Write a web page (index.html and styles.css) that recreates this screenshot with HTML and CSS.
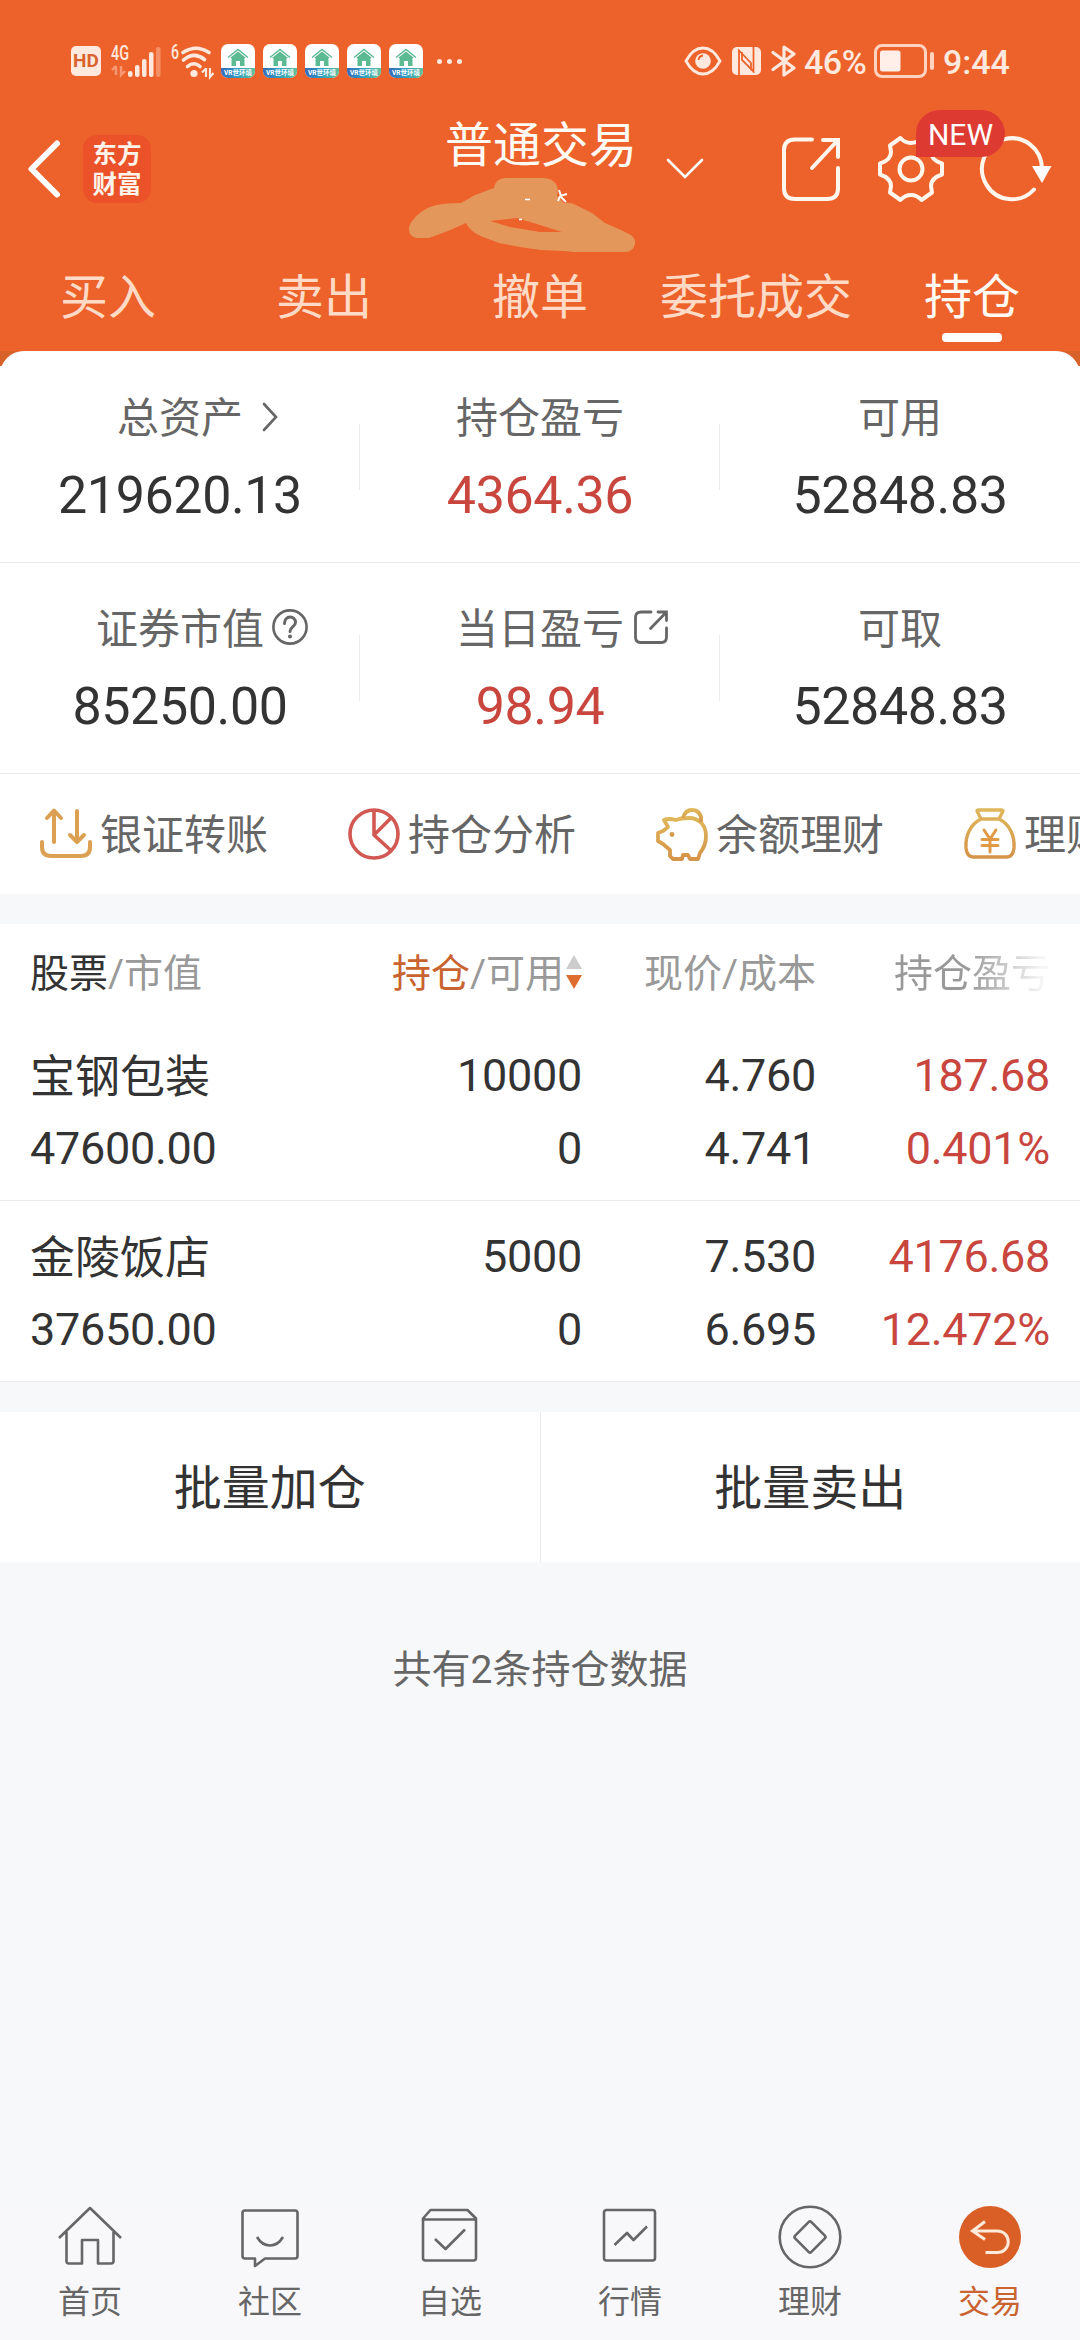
FILE: index.html
```html
<!DOCTYPE html>
<html lang="zh-CN">
<head>
  <meta charset="UTF-8">
  <title>普通交易</title>
  <link rel="stylesheet" href="styles.css">
</head>
<body>
  <!-- shared symbols -->
  <svg class="defs" width="0" height="0">
    <defs>
      <linearGradient id="strip" x1="0" x2="1" y1="0" y2="0">
        <stop offset="0" stop-color="#3a6ab8"/>
        <stop offset="0.5" stop-color="#2f9fc0"/>
        <stop offset="1" stop-color="#62c09a"/>
      </linearGradient>
      <linearGradient id="gold" x1="0" x2="0" y1="0" y2="1">
        <stop offset="0" stop-color="#dfb65a"/>
        <stop offset="1" stop-color="#d59449"/>
      </linearGradient>
      <clipPath id="app-clip"><rect width="34" height="34" rx="7"/></clipPath>
    </defs>
    <symbol id="app" viewBox="0 0 34 34">
      <g clip-path="url(#app-clip)">
        <rect width="34" height="34" fill="#fff"/>
        <rect y="24" width="34" height="10" fill="url(#strip)"/>
        <path d="M7 13.5L17 5.5l10 8" fill="none" stroke="#5cba92" stroke-width="1.4"/>
        <path d="M17 7.5l8 6.5h-1.5v8H19v-5h-4v5h-4.500v-8H9z" fill="#5cba92"/>
      </g>
    </symbol>
  </svg>

  <div class="header">
    <div class="status">
      <div class="status-left">
        <span class="hd">HD</span>
        <svg class="signal" width="50" height="34" viewBox="0 0 50 34" fill="#ffe9df">
          <text class="net" x="0" y="16" textLength="18" lengthAdjust="spacingAndGlyphs">4G</text>
          <path d="M5 22v9M1 26l4-4M10 22v9l4-4" fill="none" stroke="#f59a75" stroke-width="2.4"/>
          <rect x="17" y="27" width="4.5" height="6" rx="2"/>
          <rect x="24" y="21" width="4.5" height="12" rx="2"/>
          <rect x="31" y="15" width="4.5" height="18" rx="2"/>
          <rect x="38" y="8" width="4.5" height="25" rx="2"/>
          <rect x="45" y="3" width="4.5" height="30" rx="2" fill="#f58f66"/>
        </svg>
        <svg class="wifi" width="44" height="34" viewBox="0 0 44 34">
          <text class="net" x="0" y="15" fill="#ffe9df" textLength="8" lengthAdjust="spacingAndGlyphs">6</text>
          <g fill="none" stroke="#ffe9df" stroke-width="3.6" stroke-linecap="round">
            <path d="M12 8.5Q25 0 38 8.500"/>
            <path d="M12.500 16Q23 7 33.500 15.500"/>
            <path d="M16.500 22.500Q23 17 29 22.500"/>
          </g>
          <circle cx="23" cy="29.500" r="3.600" fill="#ffe9df"/>
          <path d="M35 24v9M31 28.500l4-4M39 24v9l3.500-4" fill="none" stroke="#ffe9df" stroke-width="2.200"/>
        </svg>
        <div class="apps">
          <div class="app"><svg width="34" height="34"><use href="#app"/></svg><span>VR世环境</span></div>
          <div class="app"><svg width="34" height="34"><use href="#app"/></svg><span>VR世环境</span></div>
          <div class="app"><svg width="34" height="34"><use href="#app"/></svg><span>VR世环境</span></div>
          <div class="app"><svg width="34" height="34"><use href="#app"/></svg><span>VR世环境</span></div>
          <div class="app"><svg width="34" height="34"><use href="#app"/></svg><span>VR世环境</span></div>
        </div>
        <div class="dots"><i></i><i></i><i></i></div>
      </div>
      <div class="status-right">
        <svg width="38" height="30" viewBox="0 0 38 30">
          <path d="M2 15Q9 2 19 2T36 15Q29 28 19 28T2 15z" fill="none" stroke="#ffe9df" stroke-width="2.800"/>
          <circle cx="19" cy="15" r="7.800" fill="#ffe9df"/>
          <path d="M14.500 14q.5-4 4.500-4.500" fill="none" stroke="#ed622b" stroke-width="1.800"/>
        </svg>
        <svg class="nfc" width="29" height="28" viewBox="0 0 29 28">
          <rect width="29" height="28" rx="5" fill="#ffe9df"/>
          <path d="M7 28V3.500L19 16v7.500M21.500 0v24.500L10 13V5" fill="none" stroke="#ed622b" stroke-width="1.800"/>
        </svg>
        <svg class="bt" width="26" height="32" viewBox="0 0 26 32">
          <path d="M2 7.500L23 23 13 30V2l10 7L2 24.500" fill="none" stroke="#ffe9df" stroke-width="3.200" stroke-linejoin="round" stroke-linecap="round"/>
        </svg>
        <span class="percent">46%</span>
        <svg class="battery" width="61" height="34" viewBox="0 0 61 34">
          <rect x="1.500" y="1.500" width="50" height="31" rx="6.500" fill="none" stroke="#ffd3bf" stroke-width="3"/>
          <rect x="6" y="6.500" width="20.500" height="21" rx="2.500" fill="#ffefe8"/>
          <rect x="56" y="8" width="4" height="18" rx="2" fill="#ffd3bf"/>
        </svg>
        <span class="time">9:44</span>
      </div>
    </div>

    <div class="navbar">
      <svg class="back" width="34" height="58" viewBox="0 0 34 58">
        <path d="M30 3.500L4.500 29 30 54.500" fill="none" stroke="#fff" stroke-width="6" stroke-linecap="round" stroke-linejoin="round"/>
      </svg>
      <div class="logo">东方<br>财富</div>
      <div class="title">普通交易</div>
      <svg class="down" width="38" height="22" viewBox="0 0 38 22">
        <path d="M2 2l17 17L36 2" fill="none" stroke="#fff" stroke-width="2.600" stroke-linecap="round"/>
      </svg>
      <svg class="share" width="58" height="64" viewBox="0 0 58 64" fill="none" stroke="#fff6ee" stroke-width="4" stroke-linecap="round">
        <path d="M30 2.500H13Q2 2.500 2 13v38.500Q2 62 13 62h32q11 0 11-10.500V31"/>
        <path d="M41 3h15v17M56 3L30 31"/>
      </svg>
      <div class="setting">
        <svg width="68" height="68" viewBox="-34 -34 68 68" fill="none" stroke="#fff6ee" stroke-width="4" stroke-linejoin="round">
          <path d="M-31-5.500v11Q-20 9-20 17l-1 6.500L-10.500 31Q-6 26 0 26t10.500 5L21 23.500 20 17Q20 9 31 5.500v-11Q20-9 20-17l1-6.500L10.500-31Q6-26 0-26t-10.500-5L-21-23.500-20-17Q-20-9-31-5.500z"/>
          <circle r="11.500"/>
        </svg>
        <span class="badge">NEW</span>
      </div>
      <svg class="refresh" width="74" height="68" viewBox="-34 -34 74 68">
        <path d="M22 20.500A30 30.500 0 1 1 30 0" fill="none" stroke="#fff6ee" stroke-width="4" stroke-linecap="round"/>
        <path d="M20-3h19.500L30 14z" fill="#fff"/>
      </svg>
      <!-- marker stroke hiding the account number -->
      <svg class="scribble" width="228" height="76" viewBox="0 0 228 76">
        <path d="M1 52Q1 47 5 43 12 34 22 30 32 26 53 26L67 18 86 11Q87 2 97 1H135Q144 1 148 7 151 12 149 19L156 26Q163 25 170 29L184 36 197 46 213 53 223 58Q228 62 227 67 225 75 217 75H166L156 74 132 73 112 70 91 66 75 60Q62 55 58 46L40 54 21 61H9Q1 60 1 52z" fill="#e4975a"/>
        <path d="M82 44l27-3 23 7 22 7h-22l-30-5z" fill="#ed622b"/>
        <path d="M151 13l2 6m-1 0l7-2m-7 2l6 6m-6-6l-2 5" fill="none" stroke="#fff" stroke-width="2"/>
        <path d="M117 22.500h5M111 42.500h3" stroke="#fff" stroke-width="1.600"/>
      </svg>
    </div>

    <div class="tabs">
      <div class="tab">买入</div>
      <div class="tab">卖出</div>
      <div class="tab">撤单</div>
      <div class="tab">委托成交</div>
      <div class="tab active">持仓</div>
    </div>
  </div>

  <div class="summary-wrap">
    <div class="summary">
      <div class="row">
        <div class="cell">
          <div class="label">总资产<svg class="more" width="18" height="30" viewBox="0 0 18 30"><path d="M3 2l12 13L3 28" fill="none" stroke="#666" stroke-width="2.600" stroke-linecap="round"/></svg></div>
          <div class="value">219620.13</div>
        </div>
        <div class="cell">
          <div class="label">持仓盈亏</div>
          <div class="value red">4364.36</div>
        </div>
        <div class="cell">
          <div class="label">可用</div>
          <div class="value">52848.83</div>
        </div>
      </div>
      <div class="row">
        <div class="cell">
          <div class="label">证券市值<svg class="help" width="36" height="36" viewBox="0 0 36 36" fill="none" stroke="#666" stroke-linecap="round"><circle cx="18" cy="18" r="16.600" stroke-width="2.600"/><path d="M12.500 14.500C12.500 6 23.500 6 23.500 13.500c0 4-5.500 4.500-5.500 9" stroke-width="3"/><circle cx="18" cy="27.500" r="1" stroke-width="2"/></svg></div>
          <div class="value">85250.00</div>
        </div>
        <div class="cell">
          <div class="label">当日盈亏<svg class="open" width="34" height="34" viewBox="0 0 34 34" fill="none" stroke="#666" stroke-width="2.800" stroke-linecap="round"><path d="M17 2H7Q1.500 2 1.500 7v20q0 5.500 5 5.500h21q5 0 5-5.500V18"/><path d="M24 2h8.500v8.500M32.500 2l-16 16.500"/></svg></div>
          <div class="value red">98.94</div>
        </div>
        <div class="cell">
          <div class="label">可取</div>
          <div class="value">52848.83</div>
        </div>
      </div>
      <div class="shortcuts">
        <div class="shortcut">
          <svg width="52" height="52" viewBox="0 0 52 52" fill="none" stroke="#dba052" stroke-width="4" stroke-linecap="round" stroke-linejoin="round">
            <path d="M14 34V3M7 10l7-7.500L21 10M37 3v31M30 27l7 7 7-7"/>
            <path d="M2 34v5q0 9 9 9h30q9 0 9-9v-5"/>
          </svg>
          <span>银证转账</span>
        </div>
        <div class="shortcut">
          <svg width="52" height="52" viewBox="0 0 52 52" fill="none" stroke="#d25953" stroke-width="3.600">
            <circle cx="26" cy="26" r="24"/>
            <path d="M26 2v25l17 15.500M26 27L43.500 9.500"/>
          </svg>
          <span>持仓分析</span>
        </div>
        <div class="shortcut">
          <svg width="52" height="52" viewBox="0 0 52 52" fill="none" stroke="url(#gold)" stroke-width="3.800" stroke-linejoin="round">
            <path d="M12 19L8 12q4-2 12 0 5-2 13-2c11 0 17 8 17 18 0 7-2 12-6 17l-2 6h-8l-2-4h-5l-1 4h-9l-3-3v-6l-7-6-5-3v-8l5-2z"/>
            <path d="M27 10q2-8 9-8t9 7v5"/>
            <circle cx="16" cy="26.500" r="2.400" fill="#d59a4a" stroke="none"/>
          </svg>
          <span>余额理财</span>
        </div>
        <div class="shortcut">
          <svg width="52" height="52" viewBox="0 0 52 52" fill="none" stroke="url(#gold)" stroke-width="3.400" stroke-linejoin="round" stroke-linecap="round">
            <path d="M17 11l-4-8q0-1 2-1h22q2 0 2 1l-4 8zM17 11C7 16 1 27 2 40q1 9 7 9h34q6 0 7-9c1-13-5-24-15-29"/>
            <path d="M20 22l6 9 6-9M18 31.500h16M18 37.500h16M26 31v13" stroke="#e09a45" stroke-width="3"/>
          </svg>
          <span>理财</span>
        </div>
      </div>
    </div>
  </div>

  <div class="positions">
    <div class="thead">
      <div><b>股票</b>/市值</div>
      <div><b class="on">持仓</b>/可用<svg class="sort" width="16" height="36" viewBox="0 0 16 36"><path d="M8 1l8 14H0z" fill="#ccc"/><path d="M0 21h16L8 35z" fill="#df6d32"/></svg></div>
      <div>现价/成本</div>
      <div class="fade">持仓盈亏</div>
    </div>
    <div class="stock">
      <div class="name">宝钢包装</div><div>10000</div><div>4.760</div><div class="red">187.68</div>
      <div>47600.00</div><div>0</div><div>4.741</div><div class="red">0.401%</div>
    </div>
    <div class="stock">
      <div class="name">金陵饭店</div><div>5000</div><div>7.530</div><div class="red">4176.68</div>
      <div>37650.00</div><div>0</div><div>6.695</div><div class="red">12.472%</div>
    </div>
  </div>

  <div class="actions">
    <div class="action">批量加仓</div>
    <div class="action">批量卖出</div>
  </div>

  <div class="count">共有2条持仓数据</div>

  <div class="tabbar">
    <div class="item">
      <svg width="66" height="64" viewBox="0 0 66 64">
        <path d="M2 33L33 3l31 30M9.500 27v29q0 2.500 2.500 2.500h13V35h16v23.500h13q2.500 0 2.500-2.500V27"/>
      </svg>
      <span>首页</span>
    </div>
    <div class="item">
      <svg width="66" height="64" viewBox="0 0 66 64">
        <path d="M8 5.500h50q2.500 0 2.500 2.500v43q0 2.500-2.500 2.500H28L18 61v-7.500H8q-2.500 0-2.500-2.500V8q0-2.500 2.500-2.500z"/>
        <path d="M20 32q5 8.500 13 8.500T46 32"/>
      </svg>
      <span>社区</span>
    </div>
    <div class="item">
      <svg width="66" height="64" viewBox="0 0 66 64">
        <path d="M6 13.500L13.500 5h37l8.500 8.500V53q0 2.500-2.500 2.500h-48Q6 55.500 6 53zM6 14.500h53"/>
        <path d="M18 34l10.500 10L48 24.500"/>
      </svg>
      <span>自选</span>
    </div>
    <div class="item">
      <svg width="66" height="64" viewBox="0 0 66 64">
        <rect x="7" y="5" width="51" height="50.500" rx="2.500"/>
        <path d="M17.500 40L30 28l6.500 7L50 21.500"/>
      </svg>
      <span>行情</span>
    </div>
    <div class="item">
      <svg width="66" height="64" viewBox="0 0 66 64">
        <circle cx="33" cy="32" r="30.300"/>
        <rect x="21.500" y="20.500" width="23" height="23" rx="2" transform="rotate(45 33 32)"/>
      </svg>
      <span>理财</span>
    </div>
    <div class="item active">
      <svg width="66" height="64" viewBox="0 0 66 64">
        <circle class="dot" cx="33" cy="32" r="31"/>
        <path d="M28 16.500L15.500 26 28 34.500M16 26h24c15 0 15 21.500 0 21.500H28.500"/>
      </svg>
      <span>交易</span>
    </div>
  </div>
</body>
</html>
```
FILE: styles.css
```css
:root {
  --orange: #ed622b;
  --text: #333;
  --sub: #666;
  --light: #999;
  --red: #c8463e;
  --line: #ebebed;
  --page: #f7f8fa;
}
* { box-sizing: border-box; }
body {
  margin: 0;
  width: 1080px;
  height: 2340px;
  display: flex;
  flex-direction: column;
  overflow: hidden;
  background: var(--page);
  color: var(--text);
  font-family: Roboto, 'Noto Sans CJK SC', sans-serif;
}
svg { display: block; flex: none; overflow: visible; }
.defs { position: absolute; }

/* header */
.header { background: var(--orange); height: 351px; }
.status {
  height: 90px;
  padding: 0 71px;
  display: flex;
  justify-content: space-between;
  color: #ffe9df;
}
.status-left, .status-right { display: flex; align-items: center; height: 122px; }
.hd {
  width: 30px; height: 30px;
  border-radius: 5px;
  background: #ffe9df;
  color: #d9622f;
  font-size: 19px;
  font-weight: 700;
  line-height: 30px;
  text-align: center;
}
.net { font-family: Roboto, sans-serif; font-size: 20px; font-weight: 500; }
.signal { margin-left: 10px; }
.wifi { margin-left: 10px; }
.apps { display: flex; gap: 8px; margin-left: 6px; }
.app { position: relative; }
.app span {
  position: absolute;
  left: 0; bottom: 0;
  width: 34px;
  color: #fff;
  font-size: 6.5px;
  font-weight: 700;
  line-height: 10px;
  text-align: center;
  white-space: nowrap;
}
.dots { display: flex; gap: 5px; margin-left: 14px; }
.dots i { width: 5px; height: 5px; border-radius: 50%; background: #ffe9df; }
.status-right { font-size: 34px; font-weight: 500; }
.nfc { margin-left: 10px; }
.bt { margin-left: 10px; }
.percent { margin: 2px 0 0 7px; width: 64px; letter-spacing: -0.5px; }
.battery { margin-left: 6px; }
.time { margin: 2px 0 0 8px; width: 66px; }

.navbar {
  position: relative;
  display: flex;
  align-items: center;
  height: 158px;
  padding-left: 27px;
}
.logo {
  width: 68px; height: 68px;
  padding-top: 3px;
  margin-left: 22px;
  border-radius: 14px;
  background: #eb5229;
  color: #fff3ea;
  font-family: 'Noto Sans CJK SC', sans-serif;
  font-size: 24.5px;
  font-weight: 700;
  line-height: 30px;
  text-align: center;
}
.title {
  margin: 0 0 46px 294px;
  color: #fffaf4;
  font-size: 48px;
  line-height: 56px;
}
.down { margin-left: 29px; }
.share { margin-left: 78px; }
.setting { position: relative; margin-left: 37px; }
.badge {
  position: absolute;
  left: 39px; top: -25px;
  z-index: 1;
  width: 89px; height: 47px;
  border-radius: 24px 24px 24px 0;
  background: #dd3b32;
  color: #fff;
  font-size: 30px;
  line-height: 49px;
  text-align: center;
}
.refresh { margin-left: 33px; }
.scribble { position: absolute; left: 408px; top: 87px; }

.tabs { display: flex; height: 103px; }
.tab {
  flex: 1;
  padding-top: 22px;
  color: #ffdbc7;
  font-size: 48px;
  line-height: 56px;
  text-align: center;
  white-space: nowrap;
}
.tab.active { color: #fffaf4; }
.tab.active::after {
  content: "";
  display: block;
  width: 60px; height: 9px;
  margin: 7px auto 0;
  border-radius: 4px;
  background: #fff;
}

/* account summary */
.summary-wrap { background: linear-gradient(#d8622a 15px, #fff 15px); }
.summary { background: #fff; border-radius: 24px 24px 0 0; height: 543px; overflow: hidden; }
.row { display: flex; height: 211px; border-bottom: 1px solid var(--line); }
.row:first-child { height: 212px; }
.row:first-child .cell { padding-top: 43px; }
.row:first-child .cell + .cell::before { top: 73px; }
.cell { position: relative; flex: 1; padding-top: 42px; text-align: center; }
.cell + .cell::before {
  content: "";
  position: absolute;
  left: -1px; top: 72px;
  width: 1px; height: 66px;
  background: var(--line);
}
.label {
  display: flex;
  align-items: center;
  justify-content: center;
  height: 50px;
  color: var(--sub);
  font-size: 42px;
  line-height: 50px;
}
.more { margin: 0 -36px 5px 18px; }
.help { margin: 0 -44px 6px 8px; }
.open { margin: 0 -44px 6px 10px; }
.value { margin-top: 22px; font-size: 52px; line-height: 60px; letter-spacing: -0.4px; }
.red { color: var(--red); }
.shortcuts { display: flex; gap: 80px; height: 120px; padding: 0 40px; align-items: center; }
.shortcut {
  display: flex;
  flex: none;
  align-items: center;
  gap: 8px;
  width: 228px;
  color: var(--sub);
  font-size: 42px;
  line-height: 50px;
  white-space: nowrap;
}
.shortcut span { padding-top: 4px; }

/* positions table */
.positions { margin-top: 30px; background: #fff; }
.thead, .stock {
  display: grid;
  grid-template-columns: 318px 234px 234px 234px;
  padding: 0 30px;
  text-align: right;
}
.thead > :first-child, .stock > :nth-child(4n+1) { text-align: left; }
.thead { height: 98px; padding-top: 2px; align-items: center; color: var(--light); font-size: 39px; line-height: 50px; }
.thead > div { white-space: nowrap; }
.thead b { font-weight: 400; color: var(--text); }
.thead .on { color: #c9632f; }
.sort { display: inline-block; margin-left: 2px; vertical-align: -3px; }
.fade {
  background: linear-gradient(90deg, var(--light) 65%, #f4f4f4 96%);
  background-clip: text;
  -webkit-background-clip: text;
  -webkit-text-fill-color: transparent;
}
.stock {
  height: 181px;
  padding-top: 19px;
  grid-auto-rows: 73px;
  border-bottom: 1px solid var(--line);
  font-size: 45px;
  line-height: 73px;
  letter-spacing: -0.3px;
}
.thead + .stock { height: 179px; padding-top: 17px; }
.stock .name { padding-top: 2px; letter-spacing: 0; }

.actions { display: flex; height: 150px; margin-top: 30px; background: #fff; }
.action { flex: 1; padding-top: 3px; font-size: 48px; line-height: 147px; text-align: center; }
.action { padding-top: 4px; line-height: 146px; }
.action + .action { border-left: 1px solid var(--line); }
.count { margin-top: 83px; color: var(--sub); font-size: 39px; line-height: 50px; text-align: center; }

/* bottom bar */
.tabbar { display: flex; margin-top: auto; height: 135px; background: #f8f8fb; }
.item {
  flex: 1;
  display: flex;
  flex-direction: column;
  align-items: center;
  color: var(--sub);
  font-size: 32px;
  line-height: 40px;
}
.item span { margin-top: 13px; }
.item svg { fill: none; stroke: var(--sub); stroke-width: 2.6; stroke-linejoin: round; }
.item.active { color: #c9632f; }
.item.active svg { stroke: #ffe9d8; stroke-width: 3; stroke-linejoin: miter; }
.item .dot { fill: #d95f26; stroke: none; }
```
